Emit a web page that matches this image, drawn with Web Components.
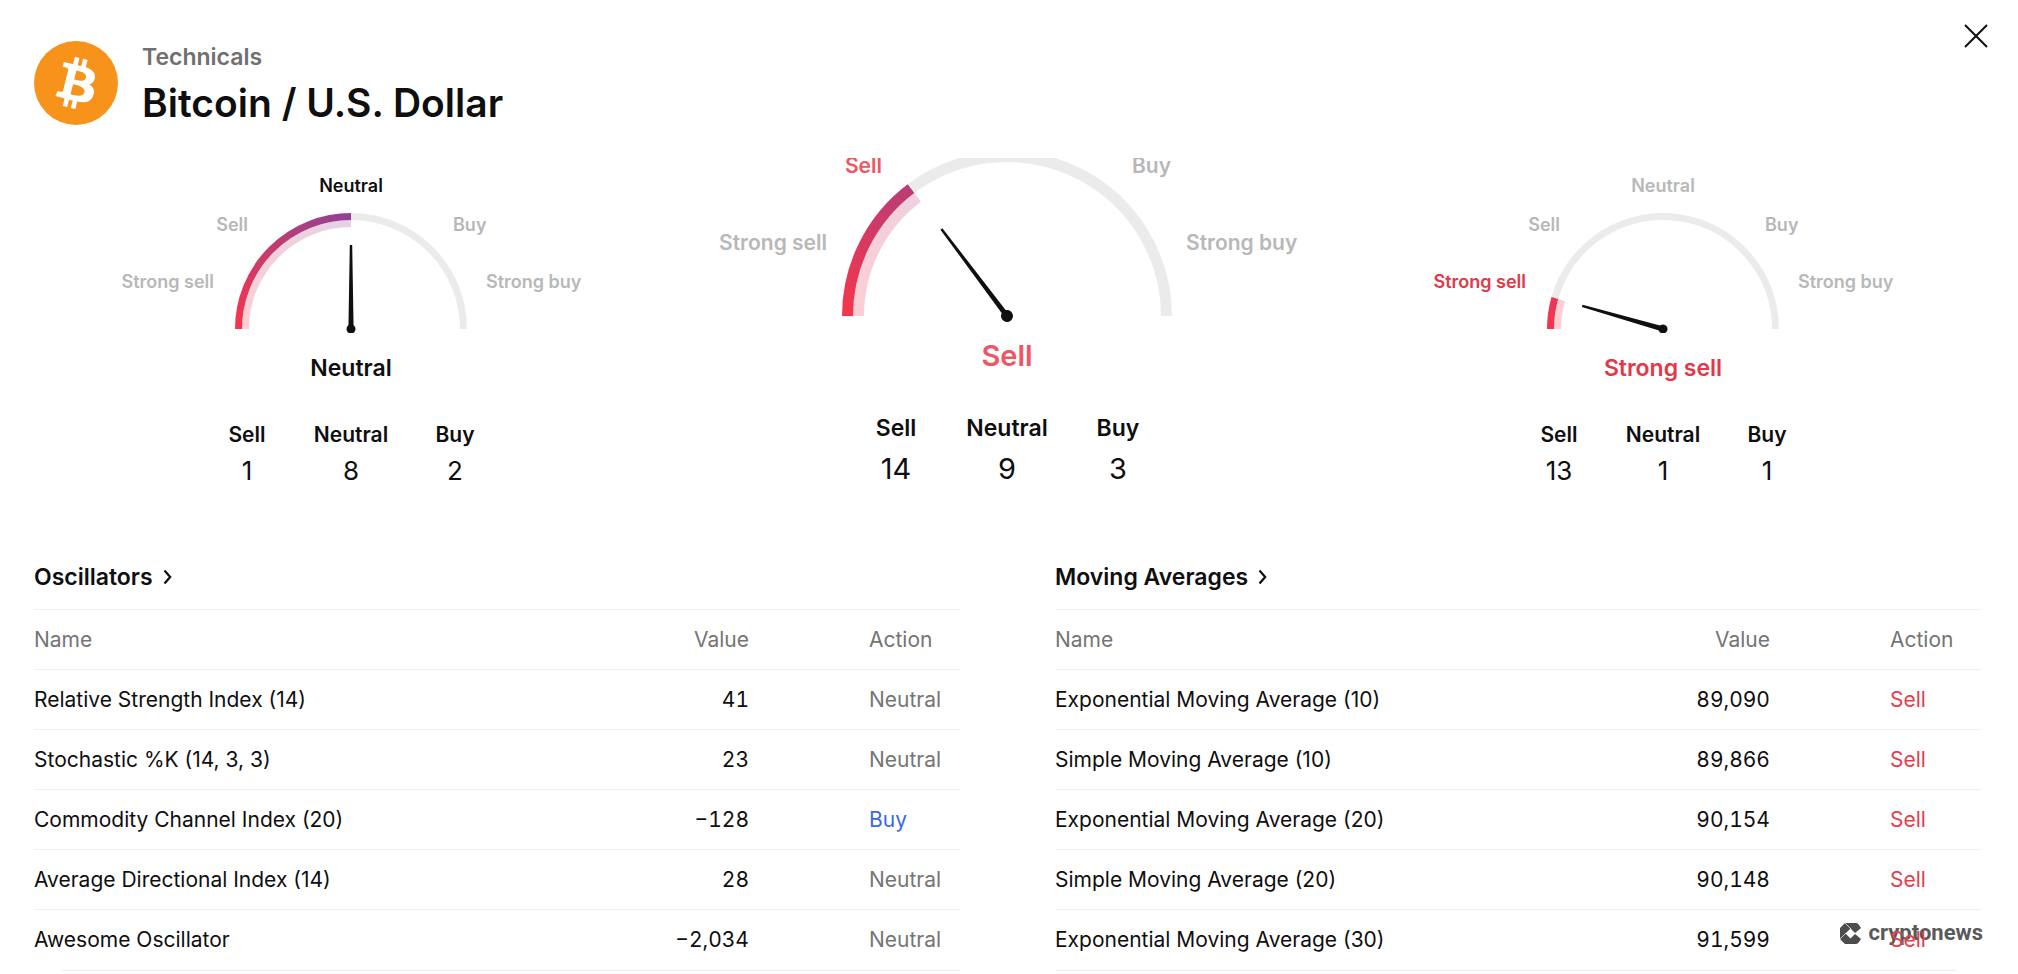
<!DOCTYPE html>
<html lang="en">
<head>
<meta charset="utf-8">
<title>Technicals – Bitcoin / U.S. Dollar</title>
<style>
  body { margin: 0; background: #fff; color: #0f0f0f; font-family: Inter, "Liberation Sans", sans-serif; overflow: hidden; }
</style>
</head>
<body>
<technicals-page>
  <symbol-header slot="header" caption="Technicals">Bitcoin / U.S. Dollar</symbol-header>
  <tech-gauge slot="gauges" level="2" angle="90" sell="1" neutral="8" buy="2"></tech-gauge>
  <tech-gauge slot="gauges" size="large" level="1" angle="53" sell="14" neutral="9" buy="3"></tech-gauge>
  <tech-gauge slot="gauges" level="0" angle="16" sell="13" neutral="1" buy="1"></tech-gauge>
  <indicator-table slot="tables" id="oscillators">Oscillators</indicator-table>
  <indicator-table slot="tables" id="averages">Moving Averages</indicator-table>
  <news-watermark slot="mark">cryptonews</news-watermark>
</technicals-page>

<script>
class TechnicalsPage extends HTMLElement {
  constructor() {
    super();
    this.attachShadow({ mode: "open" }).innerHTML = `
      <style>
        :host { display: block; position: relative; }
        .gauges { display: grid; grid-template-columns: repeat(3, minmax(0, 1fr)); padding: 0 27px 0 23px; }
        .tables { position: relative; display: grid; grid-template-columns: repeat(2, minmax(0, 1fr)); gap: 95px; padding: 72px 37px 0 34px; }
        .mark { position: absolute; right: 35px; bottom: 24px; }
      </style>
      <slot name="header"></slot>
      <section class="gauges"><slot name="gauges"></slot></section>
      <div class="mark"><slot name="mark"></slot></div>
      <section class="tables"><slot name="tables"></slot></section>`;
  }
}
customElements.define("technicals-page", TechnicalsPage);

class SymbolHeader extends HTMLElement {
  constructor() {
    super();
    this.attachShadow({ mode: "open" }).innerHTML = `
      <style>
        :host { display: flex; align-items: flex-start; gap: 24px; height: 158px; box-sizing: border-box; padding: 24px 30px 0 34px; }
        .logo { width: 84px; height: 84px; margin-top: 17px; flex: none; }
        .names { flex: 1; padding-top: 19px; }
        p, h1 { margin: 0; font-weight: 600; white-space: nowrap; }
        p { font-size: 23px; line-height: 28px; color: #707070; }
        h1 { font-size: 39px; line-height: 48px; margin-top: 8px; }
        button { border: 0; padding: 0; background: none; color: inherit; width: 24px; height: 24px; cursor: pointer; }
        button svg { display: block; }
      </style>
      <svg class="logo" viewBox="0 0 32 32" aria-hidden="true">
        <circle cx="16" cy="16" r="16" fill="#f7931a"/>
        <path fill="#fff" d="M23.189 14.02c.314-2.096-1.283-3.223-3.465-3.975l.708-2.84-1.728-.43-.69 2.765c-.454-.114-.92-.22-1.385-.326l.695-2.783L15.596 6l-.708 2.839c-.376-.086-.746-.17-1.104-.26l.002-.009-2.384-.595-.46 1.846s1.283.294 1.256.312c.7.175.826.638.805 1.006l-.806 3.235c.048.012.11.03.18.057l-.183-.045-1.13 4.532c-.086.212-.303.531-.793.41.018.025-1.256-.313-1.256-.313l-.858 1.978 2.25.561c.418.105.828.215 1.231.318l-.715 2.872 1.727.43.708-2.84c.472.127.93.245 1.378.357l-.706 2.828 1.728.43.715-2.866c2.948.558 5.164.333 6.097-2.333.752-2.146-.037-3.385-1.588-4.192 1.13-.26 1.98-1.003 2.207-2.538zm-3.95 5.538c-.533 2.147-4.148.986-5.32.695l.95-3.805c1.172.293 4.929.872 4.37 3.11zm.535-5.569c-.487 1.953-3.495.96-4.47.717l.86-3.45c.975.243 4.118.696 3.61 2.733z"/>
      </svg>
      <div class="names"><p>${this.getAttribute("caption")}</p><h1><slot></slot></h1></div>
      <button type="button" aria-label="Close">
        <svg width="24" height="24" viewBox="0 0 24 24" fill="none" stroke="#0f0f0f" stroke-width="2"><path d="M1 1 23 23M23 1 1 23"/></svg>
      </button>`;
  }
}
customElements.define("symbol-header", SymbolHeader);

const LEVELS = ["Strong sell", "Sell", "Neutral", "Buy", "Strong buy"];
const LEVEL_COLORS = ["#e2384a", "#ef5562", "#0f0f0f", "#5b8def", "#2962ff"];

/* Dial geometry: x is measured from the hub, y from the top of the drawing. */
const DIALS = {
  normal: { width: 480, height: 175, cy: 171, r: 116, band: 7, needle: 84, hub: 4.5, font: 18,
    labels: [[-137, 130, "end"], [-103, 73, "end"], [0, 34, "middle"], [102, 73, "start"], [135, 130, "start"]] },
  large: { width: 600, height: 165, cy: 158, r: 165, band: 11, needle: 109, hub: 6, font: 21,
    labels: [[-180, 92, "end"], [-125, 15, "end"], null, [125, 15, "start"], [179, 92, "start"]] },
};

class TechGauge extends HTMLElement {
  constructor() {
    super();
    const name = this.getAttribute("size") || "normal";
    const d = DIALS[name];
    const level = Number(this.getAttribute("level"));
    const deg = Number(this.getAttribute("angle"));
    const a = deg * Math.PI / 180;
    const arc = (r, from, to) => {
      const p = t => `${(-r * Math.cos(t)).toFixed(2)} ${(-r * Math.sin(t)).toFixed(2)}`;
      return `M${p(from)}A${r} ${r} 0 0 1 ${p(to)}`;
    };
    const mid = d.r - d.band / 2;
    const n = d.needle;
    const color = LEVEL_COLORS[level];
    const labels = d.labels.map((l, i) => l
      ? `<text x="${l[0]}" y="${l[1] - d.cy}" text-anchor="${l[2]}" fill="${i === level ? color : "#b8b8b8"}">${LEVELS[i]}</text>` : "").join("");
    this.attachShadow({ mode: "open" }).innerHTML = `
      <style>
        :host { display: flex; flex-direction: column; align-items: center; font-weight: 600; text-align: center; }
        svg { display: block; }
        text { font-size: ${d.font}px; font-weight: 600; }
        p { margin: 19px 0 0; color: ${color}; font-size: 23px; line-height: 32px; }
        dl { display: grid; grid-template-columns: repeat(3, 104px); margin: 37px 0 0; }
        dt { font-size: 21px; line-height: 28px; }
        dd { margin: 4px 0 0; font-size: 26px; line-height: 36px; font-weight: 400; }
        :host([size="large"]) p { margin-top: 13px; font-size: 29px; line-height: 40px; }
        :host([size="large"]) dl { grid-template-columns: repeat(3, 111px); margin-top: 38px; }
        :host([size="large"]) dt { font-size: 23px; }
        :host([size="large"]) dd { margin-top: 9px; font-size: 29px; }
      </style>
      <svg width="${d.width}" height="${d.height}" viewBox="${-d.width / 2} ${-d.cy} ${d.width} ${d.height}" role="img">
        <defs><linearGradient id="g" gradientUnits="userSpaceOnUse" x1="${-d.r}" y1="0" x2="0" y2="${-d.r}">
          <stop offset="0" stop-color="#f7354a"/><stop offset="1" stop-color="#8e4296"/></linearGradient></defs>
        <g fill="none" stroke-width="${d.band}">
          <path stroke="#ebebeb" d="${arc(mid, a, Math.PI)}"/>
          <path stroke="url(#g)" d="${arc(mid, 0, a)}"/>
          <path stroke="url(#g)" opacity=".24" d="${arc(mid - d.band, 0, a)}"/>
        </g>
        <g fill="#0f0f0f" transform="rotate(${deg})">
          <path d="M${-n} -1.2L0 -2.6V2.6L${-n} 1.2Z"/><circle r="${d.hub}"/>
        </g>
        ${labels}
      </svg>
      <p>${LEVELS[level]}</p>
      <dl>${["Sell", "Neutral", "Buy"].map(k => `<div><dt>${k}</dt><dd>${this.getAttribute(k)}</dd></div>`).join("")}</dl>`;
  }
}
customElements.define("tech-gauge", TechGauge);

const ROWS = {
  oscillators: [
    ["Relative Strength Index (14)", "41", "Neutral"],
    ["Stochastic %K (14, 3, 3)", "23", "Neutral"],
    ["Commodity Channel Index (20)", "−128", "Buy"],
    ["Average Directional Index (14)", "28", "Neutral"],
    ["Awesome Oscillator", "−2,034", "Neutral"],
  ],
  averages: [
    ["Exponential Moving Average (10)", "89,090", "Sell"],
    ["Simple Moving Average (10)", "89,866", "Sell"],
    ["Exponential Moving Average (20)", "90,154", "Sell"],
    ["Simple Moving Average (20)", "90,148", "Sell"],
    ["Exponential Moving Average (30)", "91,599", "Sell"],
  ],
};

class IndicatorTable extends HTMLElement {
  constructor() {
    super();
    const rows = ROWS[this.id].map(([n, v, act]) =>
      `<tr><td>${n}</td><td>${v}</td><td class="${act.toLowerCase()}">${act}</td></tr>`).join("");
    this.attachShadow({ mode: "open" }).innerHTML = `
      <style>
        :host { display: block; }
        h2 { margin: 0 0 16px; font-size: 23px; line-height: 32px; font-weight: 600; }
        a { display: inline-flex; align-items: center; gap: 10px; color: inherit; text-decoration: none; }
        table { width: 100%; border-collapse: separate; border-spacing: 0; table-layout: fixed; border-top: 1px solid #f0f0f0; font-size: 21px; line-height: 24px; }
        th, td { box-sizing: border-box; height: 60px; padding: 0; border-bottom: 1px solid #f0f0f0; font-weight: 400; text-align: left; white-space: nowrap; }
        tr:last-child td { border-bottom: 0; }
        thead th { border-bottom: 1px solid #f0f0f0; color: #757575; }
        .value { width: 240px; }
        .action { width: 91px; }
        th:nth-child(2), td:nth-child(2) { text-align: right; padding-right: 120px; font-variant-numeric: tabular-nums; }
        .neutral { color: #757575; }
        .buy { color: #3a68e8; }
        .sell { color: #e2404c; }
        hr { margin: 0; border: 0; height: 1px; background: #f0f0f0; }
        :host(#oscillators) hr { margin-left: 28px; }
        :host(#averages) hr { margin-right: 24px; }
      </style>
      <h2><a href="#${this.id}"><slot></slot><svg width="9" height="16" viewBox="0 0 9 16" fill="none" stroke="currentColor" stroke-width="2.2" aria-hidden="true"><path d="M1.5 1.5 7.2 8 1.5 14.5"/></svg></a></h2>
      <table>
        <colgroup><col><col class="value"><col class="action"></colgroup>
        <thead><tr><th scope="col">Name</th><th scope="col">Value</th><th scope="col">Action</th></tr></thead>
        <tbody>${rows}</tbody>
      </table>
      <hr>`;
  }
}
customElements.define("indicator-table", IndicatorTable);

class NewsWatermark extends HTMLElement {
  constructor() {
    super();
    this.attachShadow({ mode: "open" }).innerHTML = `
      <style>
        :host { display: flex; align-items: center; gap: 8px; color: #5a5a5a; font: 700 22px/28px Roboto, sans-serif; }
        svg { display: block; }
      </style>
      <svg width="21" height="21" viewBox="0 0 21 21" aria-hidden="true">
        <path fill="#4d4d4d" d="M5 0H16Q18 0 19 2L21 5 14.500 10.500 21 16 19 19Q18 21 16 21H5L0 16V5Z"/>
        <path fill="#fff" d="M10.500 5.500 15.500 10.500 10.500 15.500 5.500 10.500Z"/>
        <path stroke="#fff" stroke-width=".7" d="M6 10 0 16M11 6 5 0"/>
      </svg>
      <span><slot></slot></span>`;
  }
}
customElements.define("news-watermark", NewsWatermark);
</script>
</body>
</html>
